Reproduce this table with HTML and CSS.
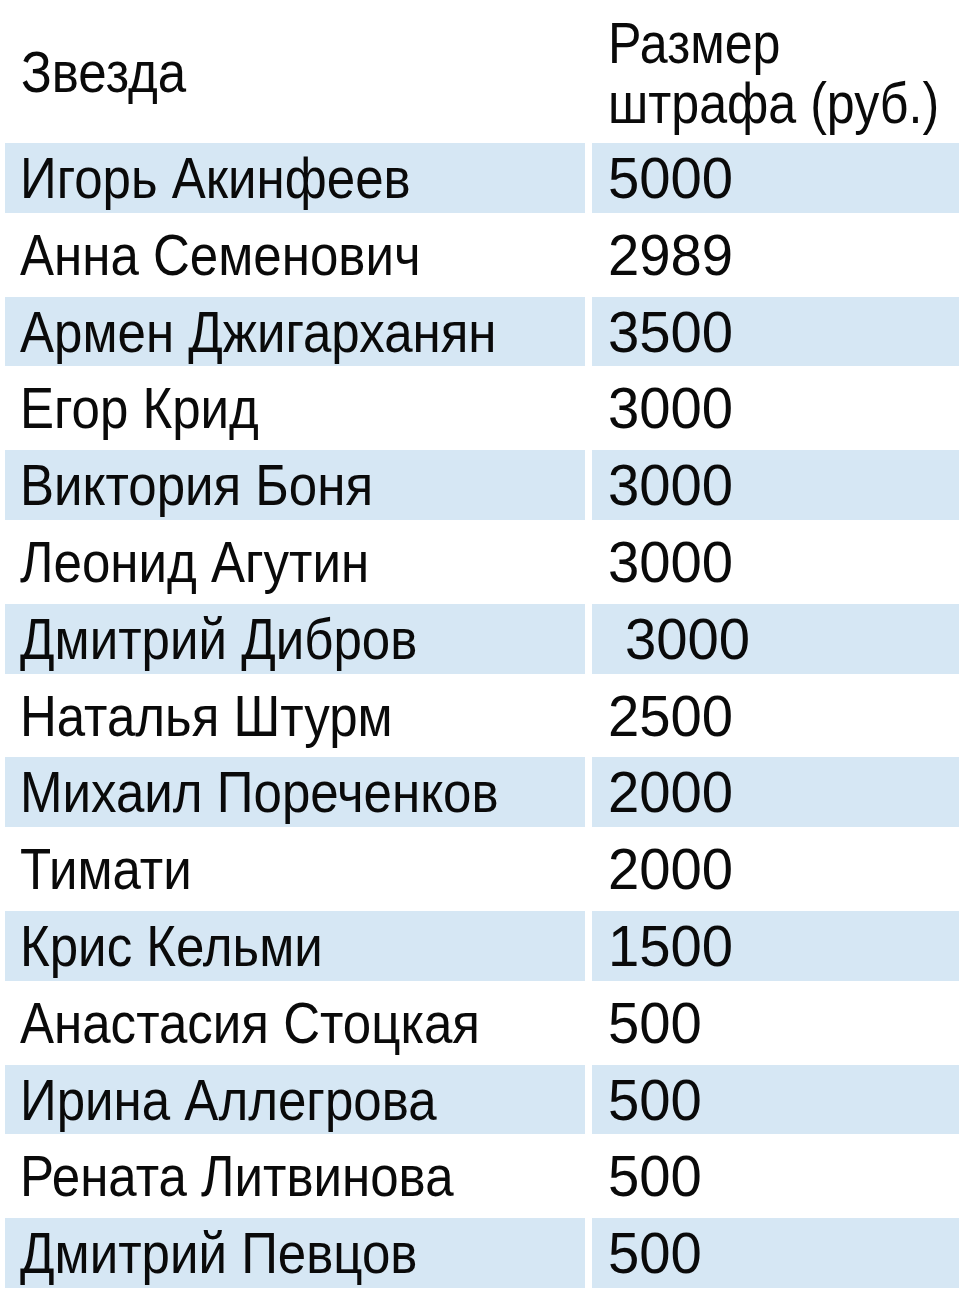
FILE: index.html
```html
<!DOCTYPE html>
<html lang="ru">
<head>
<meta charset="utf-8">
<link rel="stylesheet" href="styles.css">
</head>
<body>
<div class="table">
  <div class="head name"><span class="t">Звезда</span></div>
  <div class="head fine"><span class="t h">Размер<br>штрафа (руб.)</span></div>

  <div class="cell name blue"><span class="t">Игорь Акинфеев</span></div><div class="cell fine blue"><span class="n">5000</span></div>
  <div class="cell name"><span class="t">Анна Семенович</span></div><div class="cell fine"><span class="n">2989</span></div>
  <div class="cell name blue"><span class="t">Армен Джигарханян</span></div><div class="cell fine blue"><span class="n">3500</span></div>
  <div class="cell name"><span class="t">Егор Крид</span></div><div class="cell fine"><span class="n">3000</span></div>
  <div class="cell name blue"><span class="t">Виктория Боня</span></div><div class="cell fine blue"><span class="n">3000</span></div>
  <div class="cell name"><span class="t">Леонид Агутин</span></div><div class="cell fine"><span class="n">3000</span></div>
  <div class="cell name blue"><span class="t">Дмитрий Дибров</span></div><div class="cell fine blue indent"><span class="n">3000</span></div>
  <div class="cell name"><span class="t">Наталья Штурм</span></div><div class="cell fine"><span class="n">2500</span></div>
  <div class="cell name blue"><span class="t">Михаил Пореченков</span></div><div class="cell fine blue"><span class="n">2000</span></div>
  <div class="cell name"><span class="t">Тимати</span></div><div class="cell fine"><span class="n">2000</span></div>
  <div class="cell name blue"><span class="t">Крис Кельми</span></div><div class="cell fine blue"><span class="n">1500</span></div>
  <div class="cell name"><span class="t">Анастасия Стоцкая</span></div><div class="cell fine"><span class="n">500</span></div>
  <div class="cell name blue"><span class="t">Ирина Аллегрова</span></div><div class="cell fine blue"><span class="n">500</span></div>
  <div class="cell name"><span class="t">Рената Литвинова</span></div><div class="cell fine"><span class="n">500</span></div>
  <div class="cell name blue"><span class="t">Дмитрий Певцов</span></div><div class="cell fine blue"><span class="n">500</span></div>
</div>
</body>
</html>
```

FILE: styles.css
```css
html, body {
  margin: 0;
  padding: 0;
  background: #ffffff;
}

body {
  width: 959px;
  height: 1291px;
  overflow: hidden;
  font-family: "Liberation Sans", Arial, sans-serif;
  color: #0a0a0a;
}

.table {
  display: grid;
  grid-template-columns: 580px minmax(0, 1fr);
  grid-template-rows: 136px;
  grid-auto-rows: 69.8px;
  column-gap: 7px;
  row-gap: 7px;
  padding-left: 5px;
}

.table > div {
  min-width: 0;
}

.t,
.n {
  display: inline-block;
  white-space: nowrap;
  transform-origin: 0 50%;
}

.t {
  transform: scaleX(0.88);
}

.t.h {
  transform: scaleX(0.865);
}

.n {
  transform: scaleX(0.97);
}

.head {
  font-size: 58px;
}

.head.name {
  padding-left: 16px;
  padding-top: 43px;
  line-height: 58px;
}

.head.fine {
  padding-left: 16px;
  padding-top: 13px;
  line-height: 60px;
}

.cell {
  font-size: 58px;
  line-height: 69.8px;
  white-space: nowrap;
}

.cell.name {
  padding-left: 15px;
}

.cell.fine {
  padding-left: 16px;
}

.cell.indent {
  padding-left: 33px;
}

.blue {
  background: #d6e7f4;
}
```
